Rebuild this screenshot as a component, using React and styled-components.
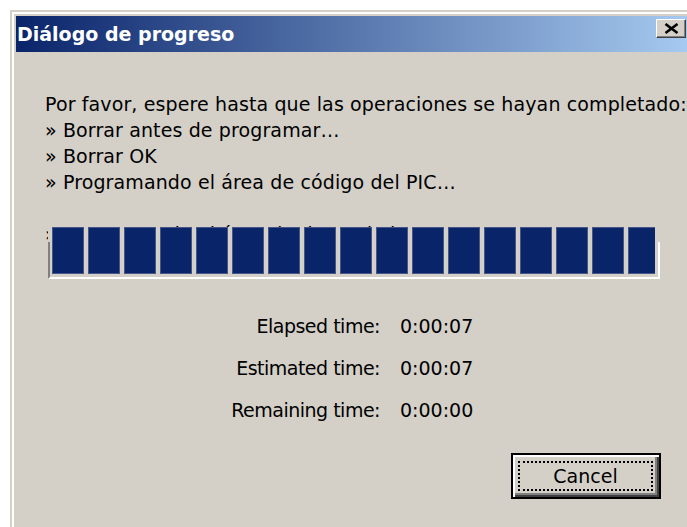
import React from "react";
import styled, { createGlobalStyle } from "styled-components";

const Global = createGlobalStyle`
  html, body {
    margin: 0;
    padding: 0;
    background: #ffffff;
    overflow: hidden;
  }
  body {
    font-family: "DejaVu Sans", "Liberation Sans", sans-serif;
  }
`;

const FACE = "#d4d0c8";

const Window = styled.div`
  margin: 10px 0 0 10px;
  width: 684px;
  height: 540px;
  box-sizing: border-box;
  border: 2px solid ${FACE};
  background: ${FACE};
  display: flex;
`;

const Frame = styled.div`
  flex: 1;
  min-width: 0;
  display: flex;
  flex-direction: column;
  border-top: 2px solid #ffffff;
  border-left: 2px solid #ffffff;
  padding: 2px 2px 0 2px;
`;

const TitleBar = styled.div`
  height: 36px;
  flex: none;
  display: flex;
  align-items: center;
  justify-content: space-between;
  padding: 0 4px 0 1px;
  background: linear-gradient(to right, #0a246a, #a6caf0);
  color: #ffffff;
  font-weight: bold;
  font-size: 19px;
`;

const TitleText = styled.span`
  white-space: nowrap;
`;

const CloseButton = styled.div`
  align-self: flex-start;
  flex: none;
  margin-top: 3px;
  width: 30px;
  height: 19px;
  box-sizing: border-box;
  display: flex;
  align-items: center;
  justify-content: center;
  background: ${FACE};
  border-top: 1px solid #ffffff;
  border-left: 1px solid #ffffff;
  border-right: 1px solid #404040;
  border-bottom: 1px solid #404040;
  box-shadow: inset -1px -1px 0 #808080;
`;

const Body = styled.div`
  flex: 1;
  min-width: 0;
  padding: 39px 29px 0 29px;
  font-size: 19px;
  line-height: 26px;
  color: #000000;
`;

const Line = styled.div`
  white-space: nowrap;
  height: 26px;
  letter-spacing: 0.12px;
`;

const Well = styled.div`
  position: relative;
  display: grid;
  margin: -20px 1px 0 3px;
  height: 52px;
  background: ${FACE};
`;

const Trough = styled.div`
  grid-area: 1 / 1;
  margin-top: 15px;
  height: 37px;
  box-sizing: border-box;
  border-left: 2px solid #808080;
  border-right: 2px solid #ffffff;
  border-bottom: 2px solid #ffffff;
`;

const Blocks = styled.div`
  grid-area: 1 / 1;
  display: flex;
  gap: 4px;
  height: 47px;
  padding-left: 4px;
  margin-right: 5px;
  overflow: hidden;
`;

const Block = styled.div`
  flex: none;
  width: 32px;
  height: 100%;
  background: #0a246a;
  box-shadow: inset 0 0 0 1px #45568a;
`;

const Times = styled.div`
  display: grid;
  grid-template-columns: 335px auto;
  column-gap: 20px;
  row-gap: 16px;
  margin-top: 34px;
`;

const Label = styled.div`
  text-align: right;
  white-space: nowrap;
  letter-spacing: -0.5px;
`;

const Value = styled.div`
  white-space: nowrap;
`;

const ButtonRow = styled.div`
  display: flex;
  justify-content: flex-end;
  margin-top: 30px;
`;

const Button = styled.button`
  width: 150px;
  height: 46px;
  box-sizing: border-box;
  display: flex;
  padding: 6px 6px 6px 5px;
  margin: 0;
  font: inherit;
  color: #000000;
  background: ${FACE};
  border: 2px solid #000000;
  box-shadow: inset 2px 2px 0 #ffffff, inset -2px -2px 0 #404040,
    inset -4px -4px 0 #808080;
  cursor: default;
`;

const FocusRing = styled.span`
  flex: 1;
  display: flex;
  align-items: center;
  justify-content: center;
  border: 2px dotted #000000;
`;

const lines = [
  "Por favor, espere hasta que las operaciones se hayan completado:",
  "» Borrar antes de programar…",
  "» Borrar OK",
  "» Programando el área de código del PIC…",
];

const times = [
  ["Elapsed time:", "0:00:07"],
  ["Estimated time:", "0:00:07"],
  ["Remaining time:", "0:00:00"],
];

export default function App() {
  return (
    <>
      <Global />
      <Window>
        <Frame>
          <TitleBar>
            <TitleText>Diálogo de progreso</TitleText>
            <CloseButton>
              <svg width="15" height="11" viewBox="0 0 15 11">
                <path
                  d="M1.5 1 L13.5 10 M13.5 1 L1.5 10"
                  stroke="#000"
                  strokeWidth="2.6"
                  fill="none"
                />
              </svg>
            </CloseButton>
          </TitleBar>
          <Body>
            {lines.map((t) => (
              <Line key={t}>{t}</Line>
            ))}
            <Line />
            <Line>» Programando el área de datos de la EEPROM…</Line>
            <Well>
              <Trough />
              <Blocks>
                {Array.from({ length: 17 }, (_, i) => (
                  <Block key={i} />
                ))}
              </Blocks>
            </Well>
            <Times>
              {times.map(([l, v]) => (
                <React.Fragment key={l}>
                  <Label>{l}</Label>
                  <Value>{v}</Value>
                </React.Fragment>
              ))}
            </Times>
            <ButtonRow>
              <Button>
                <FocusRing>Cancel</FocusRing>
              </Button>
            </ButtonRow>
          </Body>
        </Frame>
      </Window>
    </>
  );
}
